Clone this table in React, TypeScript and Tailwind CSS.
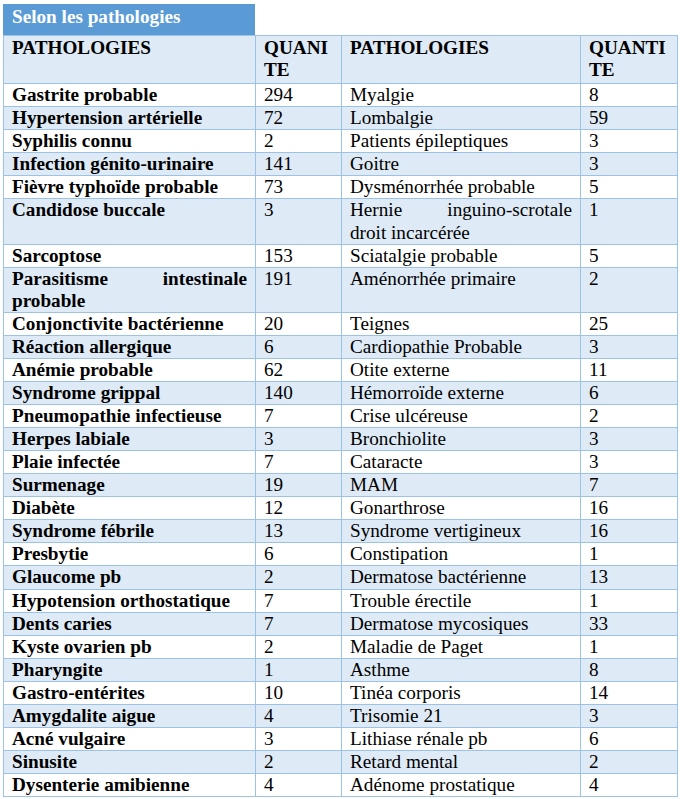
import React from "react";

type Row = { a: React.ReactNode; qa: string; b: React.ReactNode; qb: string };

const J = ({ first, second }: { first: string; second: string }) => (
  <>
    <span className="block text-justify [text-align-last:justify]">{first}</span>
    <span className="block">{second}</span>
  </>
);

const rows: Row[] = [
  { a: "Gastrite probable", qa: "294", b: "Myalgie", qb: "8" },
  { a: "Hypertension artérielle", qa: "72", b: "Lombalgie", qb: "59" },
  { a: "Syphilis connu", qa: "2", b: "Patients épileptiques", qb: "3" },
  { a: "Infection génito-urinaire", qa: "141", b: "Goitre", qb: "3" },
  { a: "Fièvre typhoïde probable", qa: "73", b: "Dysménorrhée probable", qb: "5" },
  {
    a: "Candidose buccale",
    qa: "3",
    b: <J first="Hernie inguino-scrotale" second="droit incarcérée" />,
    qb: "1",
  },
  { a: "Sarcoptose", qa: "153", b: "Sciatalgie probable", qb: "5" },
  {
    a: <J first="Parasitisme intestinale" second="probable" />,
    qa: "191",
    b: "Aménorrhée primaire",
    qb: "2",
  },
  { a: "Conjonctivite bactérienne", qa: "20", b: "Teignes", qb: "25" },
  { a: "Réaction allergique", qa: "6", b: "Cardiopathie Probable", qb: "3" },
  { a: "Anémie probable", qa: "62", b: "Otite externe", qb: "11" },
  { a: "Syndrome grippal", qa: "140", b: "Hémorroïde externe", qb: "6" },
  { a: "Pneumopathie infectieuse", qa: "7", b: "Crise ulcéreuse", qb: "2" },
  { a: "Herpes labiale", qa: "3", b: "Bronchiolite", qb: "3" },
  { a: "Plaie infectée", qa: "7", b: "Cataracte", qb: "3" },
  { a: "Surmenage", qa: "19", b: "MAM", qb: "7" },
  { a: "Diabète", qa: "12", b: "Gonarthrose", qb: "16" },
  { a: "Syndrome fébrile", qa: "13", b: "Syndrome vertigineux", qb: "16" },
  { a: "Presbytie", qa: "6", b: "Constipation", qb: "1" },
  { a: "Glaucome pb", qa: "2", b: "Dermatose bactérienne", qb: "13" },
  { a: "Hypotension orthostatique", qa: "7", b: "Trouble érectile", qb: "1" },
  { a: "Dents caries", qa: "7", b: "Dermatose mycosiques", qb: "33" },
  { a: "Kyste ovarien pb", qa: "2", b: "Maladie de Paget", qb: "1" },
  { a: "Pharyngite", qa: "1", b: "Asthme", qb: "8" },
  { a: "Gastro-entérites", qa: "10", b: "Tinéa corporis", qb: "14" },
  { a: "Amygdalite aigue", qa: "4", b: "Trisomie 21", qb: "3" },
  { a: "Acné vulgaire", qa: "3", b: "Lithiase rénale pb", qb: "6" },
  { a: "Sinusite", qa: "2", b: "Retard mental", qb: "2" },
  { a: "Dysenterie amibienne", qa: "4", b: "Adénome prostatique", qb: "4" },
];

const ff = "font-['Liberation_Serif','Times_New_Roman',serif]";

const cell = `border border-[#9cc2e5] px-[8px] py-0 align-top text-left leading-[22.07px] ${ff}`;

export default function App() {
  return (
    <div className={`bg-white w-[680px] h-[799px] overflow-hidden text-black text-[19.2px] ${ff}`}>
      <div className={`ml-[3px] mt-[4px] w-[252px] h-[31px] bg-[#5b9bd5] pl-[9px] pt-[2px] font-bold text-white leading-[22px] ${ff}`}>
        Selon les pathologies
      </div>
      <table className={`ml-[3px] w-[674px] table-fixed border-collapse ${ff}`}>
        <colgroup>
          <col className="w-[252px]" />
          <col className="w-[86px]" />
          <col className="w-[239px]" />
          <col className="w-[97px]" />
        </colgroup>
        <thead>
          <tr className="bg-[#deeaf6] font-bold">
            <th className={`${cell} pt-[1px] pb-[2px] font-bold`}>PATHOLOGIES</th>
            <th className={`${cell} pt-[1px] pb-[2px] font-bold`}>
              QUANI
              <br />
              TE
            </th>
            <th className={`${cell} pt-[1px] pb-[2px] font-bold`}>PATHOLOGIES</th>
            <th className={`${cell} pt-[1px] pb-[2px] font-bold`}>
              QUANTI
              <br />
              TE
            </th>
          </tr>
        </thead>
        <tbody>
          {rows.map((r, i) => (
            <tr key={i} className={i % 2 === 1 ? "bg-[#deeaf6]" : "bg-white"}>
              <td className={`${cell} font-bold`}>{r.a}</td>
              <td className={cell}>{r.qa}</td>
              <td className={cell}>{r.b}</td>
              <td className={cell}>{r.qb}</td>
            </tr>
          ))}
        </tbody>
      </table>
    </div>
  );
}
